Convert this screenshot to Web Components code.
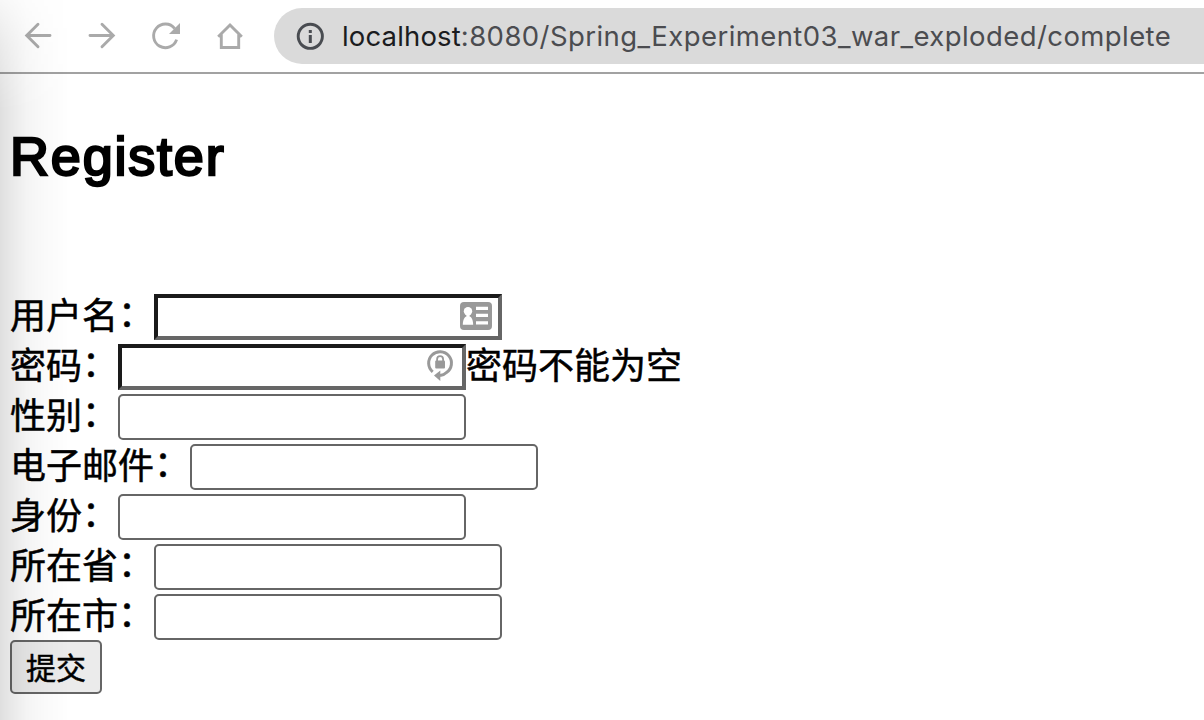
<!DOCTYPE html>
<html lang="zh-CN">
<head>
<meta charset="utf-8">
<title>Register</title>
<style>
html,body{margin:0;height:100%;overflow:hidden;background:#fff}
form-row i{font-style:normal;display:inline-block;transform:translateY(-2px)}
</style>
</head>
<body>
<browser-window>
  <browser-toolbar slot="toolbar"><span slot="host">localhost</span><span slot="path">:8080/Spring_Experiment03_war_exploded/complete</span></browser-toolbar>
  <register-form>
    <span slot="title">Register</span>
    <form-row kind="card">用户名<i>：</i></form-row>
    <form-row kind="lock">密码<i>：</i><span slot="error">密码不能为空</span></form-row>
    <form-row>性别<i>：</i></form-row>
    <form-row>电子邮件<i>：</i></form-row>
    <form-row>身份<i>：</i></form-row>
    <form-row>所在省<i>：</i></form-row>
    <form-row>所在市<i>：</i></form-row>
    <submit-button slot="action">提交</submit-button>
  </register-form>
</browser-window>
<script>
const define = (name, html) => customElements.define(name, class extends HTMLElement {
  constructor() {
    super();
    this.attachShadow({mode: 'open'}).innerHTML = html;
  }
});

define('browser-window', `
<style>
:host{display:flex;flex-direction:column;position:relative;width:1204px;height:720px;overflow:hidden;background:#fff}
.shade{position:absolute;inset:0 auto 0 0;width:70px;pointer-events:none;
background:linear-gradient(90deg,rgba(0,0,0,.125) 0,rgba(0,0,0,.085) 12px,rgba(0,0,0,.045) 27px,rgba(0,0,0,.018) 45px,rgba(0,0,0,.006) 60px,transparent 70px);
-webkit-mask-image:linear-gradient(180deg,rgba(0,0,0,.25),rgba(0,0,0,.65) 45px,#000 110px);mask-image:linear-gradient(180deg,rgba(0,0,0,.25),rgba(0,0,0,.65) 45px,#000 110px)}
</style>
<slot name="toolbar"></slot><slot></slot><div class="shade"></div>`);

define('browser-toolbar', `
<style>
:host{display:flex;align-items:flex-start;box-sizing:border-box;height:74px;padding:8px 0 0 22px;border-bottom:2px solid #a2a2a2;font-family:Inter,sans-serif}
nav{display:flex;gap:32px;padding-top:12px;width:252px;flex:none}
svg{display:block;width:32px;height:32px;fill:none;stroke:#aaa;stroke-width:2.9}
.url{display:flex;align-items:center;flex:1;height:56px;padding-left:20px;box-sizing:border-box;border-radius:28px 0 0 28px;background:#dadada;white-space:nowrap}
.url svg{stroke:#494c51;margin-right:16px;flex:none}
.text{display:block;font-size:27.5px;line-height:56px;letter-spacing:.42px;color:#4b4c50}
.host{color:#1b1c20;letter-spacing:.15px}
</style>
<nav>
<svg viewBox="0 0 32 32"><path stroke-linecap="round" d="M28 15.5H5M16 4.2 4.7 15.5 16 26.8"/></svg>
<svg viewBox="0 0 32 32"><path stroke-linecap="round" d="M4 15.5H27M16 4.2 27.3 15.5 16 26.8"/></svg>
<svg viewBox="0 0 32 32"><path d="M26.6 19.6A11.8 11.8 0 1 1 24.7 8.6"/><path d="M30 3V14H19z" fill="#aaa" stroke="none"/></svg>
<svg viewBox="0 0 32 32"><path d="M4.2 16.8 16 5 27.8 16.8M7.3 14.5V27.5H24.7V14.5"/></svg>
</nav>
<div class="url">
<svg viewBox="0 0 32 32"><circle cx="16.3" cy="16.3" r="12.1"/><path d="M16.3 15V23M16.3 10V13" stroke-width="3"/></svg>
<div class="text"><span class="host"><slot name="host"></slot></span><slot name="path"></slot></div>
</div>`);

define('register-form', `
<style>
:host{display:block;padding:0 10px;color:#000;font-family:"Liberation Sans","Noto Sans CJK SC",sans-serif}
h1{margin:47px 0 0;height:172px;font-size:54px;line-height:70px;font-weight:400;letter-spacing:1.8px;-webkit-text-stroke:2.4px #000}
</style>
<h1><slot name="title"></slot></h1>
<slot></slot><slot name="action"></slot>`);

customElements.define('form-row', class extends HTMLElement {
  constructor() {
    super();
    this.attachShadow({mode: 'open'});
  }
  connectedCallback() {
    const icons = {
      card: `<svg width="32" height="28" viewBox="0 0 32 28"><rect width="32" height="28" rx="4" fill="#999"/><circle cx="8" cy="9.2" r="4.2" fill="#fff"/><path d="M2.8 22.8C3 17.5 4.5 15 6.4 14.4V12h3.2v2.4c2 .6 3.4 3.1 3.6 8.4z" fill="#fff"/><path d="M16 6.4H28M16 13.4H28M16 20.8H28" stroke="#fff" stroke-width="3.2"/></svg>`,
      lock: `<svg width="28" height="34" viewBox="0 0 28 34"><path d="M6.7 23.8A11.4 11.4 0 1 1 20.5 24.5Q18 27 14 27.6" fill="none" stroke="#999" stroke-width="3"/><path d="M8 27.5 14.3 22.4V33z" fill="#999"/><rect x="9.2" y="12.5" width="9.8" height="8" rx="1" fill="#999"/><path d="M11.1 13V11.2a3 3 0 0 1 6 0V13" fill="none" stroke="#999" stroke-width="1.8"/></svg>`
    };
    const kind = this.getAttribute('kind');
    this.shadowRoot.innerHTML = `
<style>
:host{display:flex;height:50px;align-items:flex-start;font-size:36px;line-height:46px;white-space:nowrap;font-family:"Noto Sans CJK SC",sans-serif;-webkit-text-stroke:.5px #000}
.label,.error{display:block;margin-top:-3px}
.field{display:flex;align-items:center;justify-content:flex-end;box-sizing:border-box;width:348px;height:46px;margin-top:1px;background:#fff;border:2px solid #666;border-radius:5px}
.field.inset{border:4px solid;border-color:#1a1a1a #666 #666 #1a1a1a;border-radius:0}
.card svg{margin:0 6px 2px 0}.lock svg{margin:0 8px 4px 0}
</style>
<span class="label"><slot></slot></span>
<div class="field ${kind ? 'inset ' + kind : ''}">${icons[kind] || ''}</div>
<span class="error"><slot name="error"></slot></span>`;
  }
});

define('submit-button', `
<style>
:host{display:block;font-family:"Noto Sans CJK SC",sans-serif}
button{display:block;box-sizing:border-box;width:92px;height:54px;margin:-3px 0 0;padding:0 0 3px;border:2px solid #666;border-radius:5px;background:#ebebeb;color:#000;font:30px/46px "Noto Sans CJK SC",sans-serif;-webkit-text-stroke:.5px #000}
</style>
<button type="button"><slot></slot></button>`);
</script>
</body>
</html>
